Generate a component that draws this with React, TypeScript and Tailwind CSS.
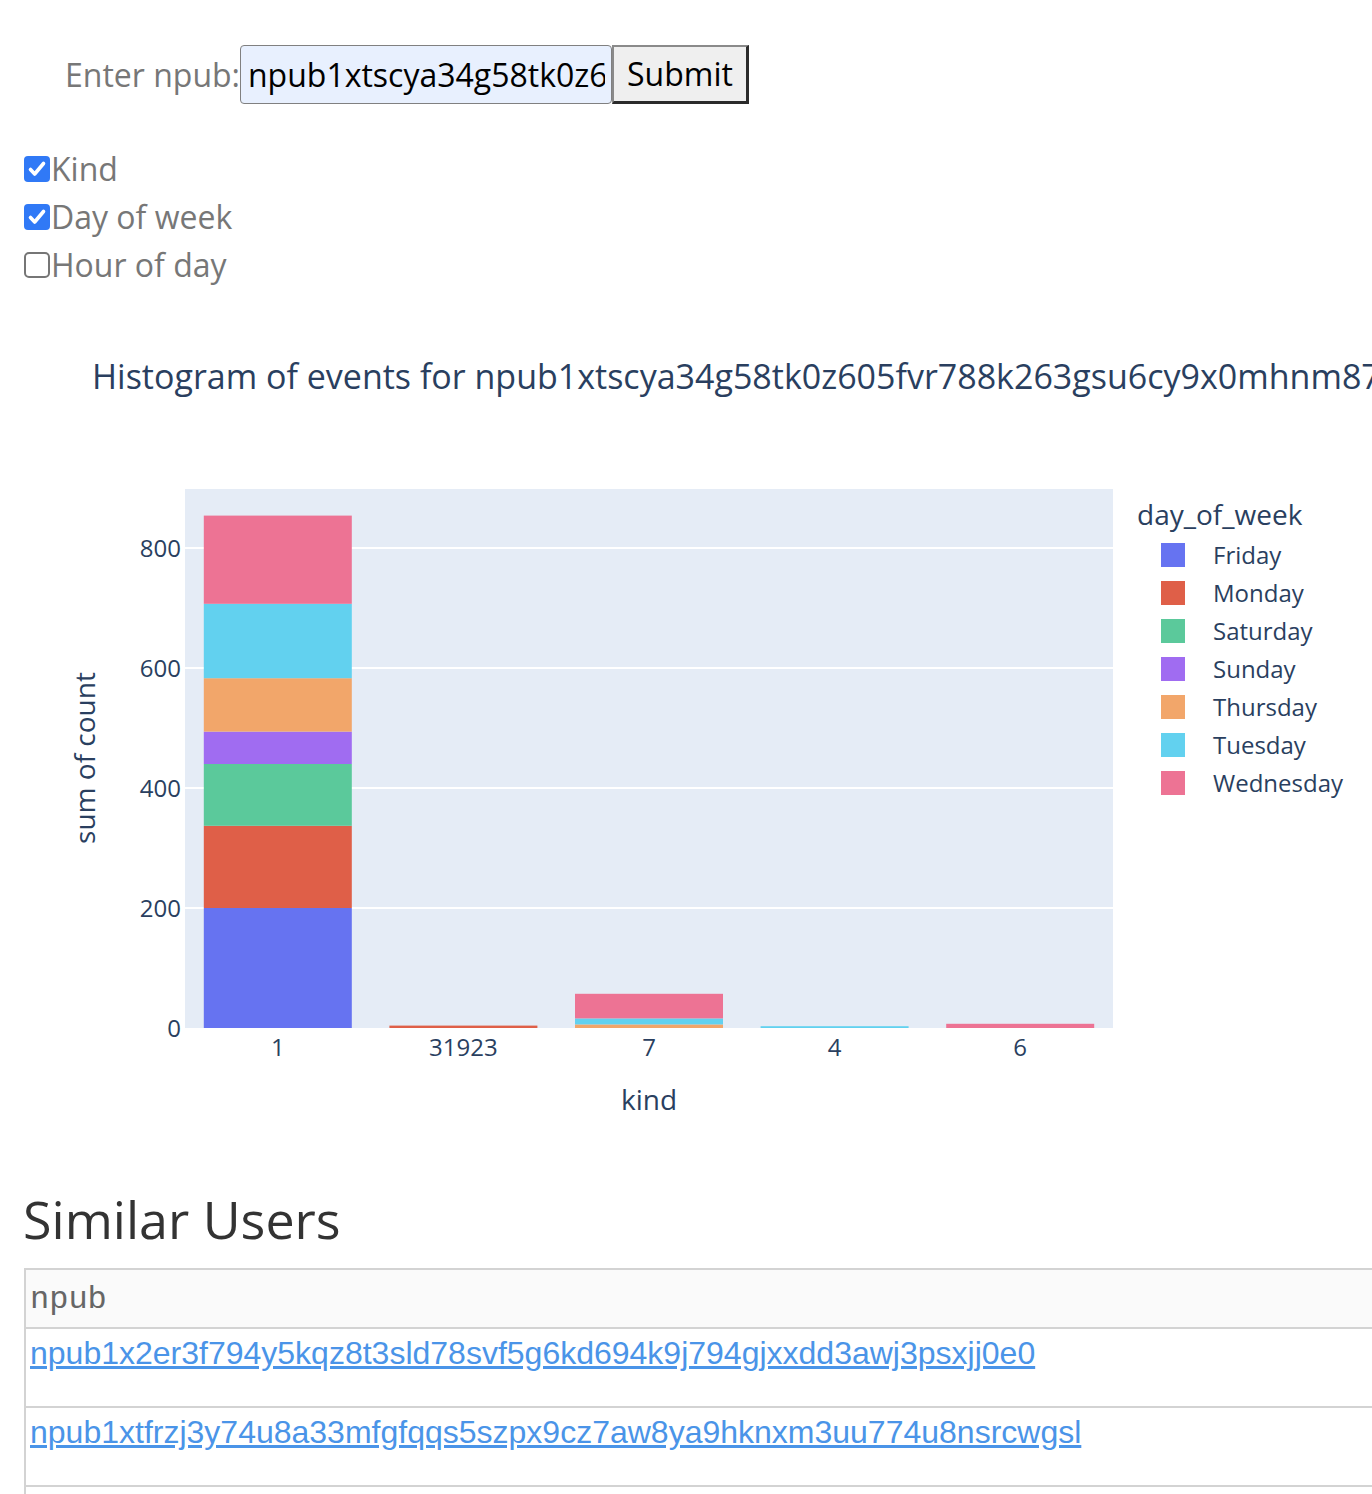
import React from "react";

type Series = { name: string; color: string };

const SERIES: Series[] = [
  { name: "Friday", color: "#6673f1" },
  { name: "Monday", color: "#df5f48" },
  { name: "Saturday", color: "#5bc99b" },
  { name: "Sunday", color: "#a06cf1" },
  { name: "Thursday", color: "#f2a66a" },
  { name: "Tuesday", color: "#62d1ef" },
  { name: "Wednesday", color: "#ed7394" },
];

const BARS: { kind: string; values: Record<string, number> }[] = [
  {
    kind: "1",
    values: { Friday: 200, Monday: 137, Saturday: 103, Sunday: 54, Thursday: 89, Tuesday: 124, Wednesday: 147 },
  },
  { kind: "31923", values: { Monday: 4 } },
  { kind: "7", values: { Thursday: 6, Tuesday: 10, Wednesday: 41 } },
  { kind: "4", values: { Tuesday: 3 } },
  { kind: "6", values: { Wednesday: 7 } },
];

const PLOT_X = 185;
const PLOT_Y = 189;
const PLOT_W = 928;
const PLOT_H = 539;
const BASE = PLOT_Y + PLOT_H; // 728
const PX_PER_UNIT = 0.6;
const STEP = PLOT_W / 5;
const BAR_W = 148;
const TXT = "#2a3f5f";

function Chart() {
  return (
    <svg width={1372} height={860} viewBox="0 0 1372 860" className="block">
      <text x={92} y={89} fontSize={34} fill={TXT}>
        Histogram of events for npub1xtscya34g58tk0z605fvr788k263gsu6cy9x0mhnm87rlmmc5p03jmu5hxv
      </text>

      <rect x={PLOT_X} y={PLOT_Y} width={PLOT_W} height={PLOT_H} fill="#e5ecf6" />
      {[200, 400, 600, 800].map((v) => (
        <line
          key={v}
          x1={PLOT_X}
          x2={PLOT_X + PLOT_W}
          y1={BASE - v * PX_PER_UNIT}
          y2={BASE - v * PX_PER_UNIT}
          stroke="#ffffff"
          strokeWidth={2}
        />
      ))}
      {[0, 200, 400, 600, 800].map((v) => (
        <text key={v} x={181} y={BASE - v * PX_PER_UNIT + 8.6} fontSize={24} fill={TXT} textAnchor="end">
          {v}
        </text>
      ))}

      {BARS.map((b, i) => {
        const cx = PLOT_X + STEP / 2 + STEP * i;
        let acc = 0;
        return (
          <g key={b.kind}>
            {SERIES.map((s) => {
              const v = b.values[s.name];
              if (!v) return null;
              const y0 = BASE - acc * PX_PER_UNIT;
              acc += v;
              const y1 = BASE - acc * PX_PER_UNIT;
              return <rect key={s.name} x={cx - BAR_W / 2} y={y1} width={BAR_W} height={y0 - y1} fill={s.color} />;
            })}
            <text x={cx} y={755.6} fontSize={24} fill={TXT} textAnchor="middle">
              {b.kind}
            </text>
          </g>
        );
      })}

      <text x={649} y={810} fontSize={28} fill={TXT} textAnchor="middle">
        kind
      </text>
      <text transform="translate(95 458) rotate(-90)" fontSize={28} fill={TXT} textAnchor="middle">
        sum of count
      </text>

      <text x={1137} y={225} fontSize={28} fill={TXT}>
        day_of_week
      </text>
      {SERIES.map((s, i) => {
        const cy = 255 + i * 38;
        return (
          <g key={s.name}>
            <rect x={1161} y={cy - 12} width={24} height={24} fill={s.color} />
            <text x={1213} y={cy + 8.6} fontSize={24} fill={TXT}>
              {s.name}
            </text>
          </g>
        );
      })}
    </svg>
  );
}

function Check({ checked, label }: { checked: boolean; label: string }) {
  return (
    <div className="flex h-[48px] items-center">
      {checked ? (
        <span className="flex h-[26px] w-[26px] items-center justify-center rounded-[4px] bg-[#3079f6]">
          <svg width="26" height="26" viewBox="0 0 26 26">
            <path d="M6.5 13.5l4.2 4.5L19.5 7.5" fill="none" stroke="#ffffff" strokeWidth="3.6" strokeLinecap="round" strokeLinejoin="round" />
          </svg>
        </span>
      ) : (
        <span className="h-[26px] w-[26px] rounded-[5px] border-2 border-[#767676] bg-white" />
      )}
      <span className="ml-px text-[32px] leading-[48px] text-[#777777]">{label}</span>
    </div>
  );
}

export default function App() {
  return (
    <div className="w-[1372px] overflow-hidden bg-white pt-[45px] font-['Open_Sans',sans-serif]">
      <div className="flex h-[59px] items-center pl-[65px]">
        <span className="text-[32px] text-[#777777]">Enter npub:</span>
        <input
          readOnly
          defaultValue="npub1xtscya34g58tk0z605fvr788k263gsu6cy9x0mhnm87rlmmc5p03jmu5hxv"
          className="h-[59px] w-[372px] rounded-[4px] border border-[#808080] bg-[#e8f0fe] pl-[7px] pr-[6px] text-[32px] text-black outline-none"
        />
        <button className="h-[59px] w-[137px] border-t-2 border-l-2 border-r-[3px] border-b-[3px] border-t-[#8a8a8a] border-l-[#8a8a8a] border-r-[#2b2b2b] border-b-[#2b2b2b] bg-[#efefef] text-[32px] text-black">
          Submit
        </button>
      </div>

      <div className="mt-[41px] pl-[24px]">
        <Check checked label="Kind" />
        <Check checked label="Day of week" />
        <Check checked={false} label="Hour of day" />
      </div>

      <div className="mt-[11px]">
        <Chart />
      </div>

      <h2 className="mt-[28px] pl-[23px] text-[52px] leading-[62px] text-[#333333]">Similar Users</h2>

      <div className="ml-[24px] mt-[18px] w-[1500px] border-l-2 border-t-2 border-[#d3d3d3]">
        <div className="flex h-[59px] items-center border-b-2 border-[#d3d3d3] bg-[#fafafa] pl-[4px] pt-[2px] font-['Liberation_Mono','Courier_New',monospace] text-[32px] text-[#666666]">
          npub
        </div>
        {[
          "npub1x2er3f794y5kqz8t3sld78svf5g6kd694k9j794gjxxdd3awj3psxjj0e0",
          "npub1xtfrzj3y74u8a33mfgfqqs5szpx9cz7aw8ya9hknxm3uu774u8nsrcwgsl",
          "npub1q3sle0kvfsehgsuexttt3ugjd8xdklxfwwkh559wxckmzddywnws6cd26p",
        ].map((n) => (
          <div
            key={n}
            className="h-[79px] border-b-2 border-[#d3d3d3] pl-[4px] font-['Liberation_Sans',Arial,sans-serif] text-[32px] leading-normal"
          >
            <a href="#" className="text-[#4a94e8] underline">
              {n}
            </a>
          </div>
        ))}
      </div>
    </div>
  );
}
